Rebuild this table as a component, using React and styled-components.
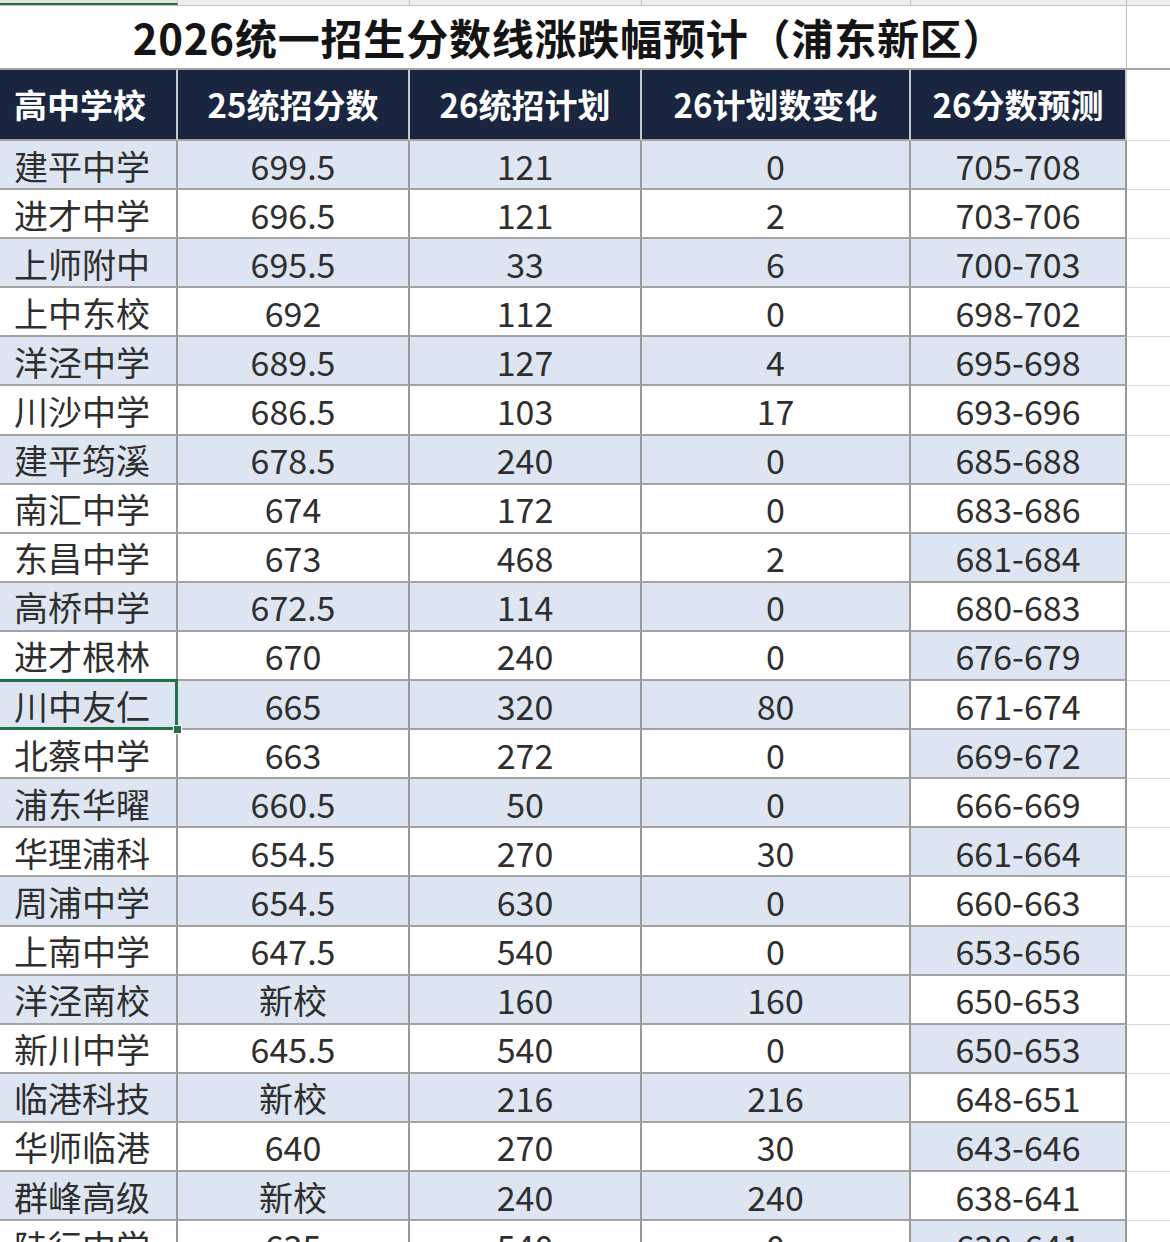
import React from "react";
import styled, { createGlobalStyle, css } from "styled-components";

const GlobalStyle = createGlobalStyle`
  html, body { margin: 0; padding: 0; background: #ffffff; }
  body { font-family: "Noto Sans CJK SC", "Noto Sans", sans-serif; }
  * { box-sizing: border-box; }
`;

const COLS = "178px 232px 232px 269px 216px 1fr";
const BLUE = "#dce5f1";
const LINE = "#a3a3a3";

const Sheet = styled.div`
  width: 1170px;
  height: 1242px;
  overflow: hidden;
  background: #fff;
  color: #2e2e2e;
`;

const Strip = styled.div`
  display: grid;
  grid-template-columns: ${COLS};
  height: 6px;
  background: #ededed;
  border-bottom: 1px solid #c4c4c4;
`;

const StripCell = styled.div`
  border-right: 1px solid #c4c4c4;
  ${(p) =>
    p.$active &&
    css`
      background: #e2e2e2;
      border-bottom: 2px solid #217346;
    `}
  &:last-child { border-right: none; }
`;

const TitleRow = styled.div`
  display: grid;
  grid-template-columns: ${COLS};
  height: 64px;
  border-bottom: 2px solid ${LINE};
`;

const Title = styled.h1`
  grid-column: 1 / span 5;
  margin: 0;
  display: flex;
  align-items: center;
  justify-content: center;
  padding: 0 0 0 12px;
  font-size: 42px;
  line-height: 1;
  font-weight: 700;
  color: #141414;
  letter-spacing: 0.8px;
  border-right: 1px solid #bdbdbd;
`;

const Row = styled.div`
  display: grid;
  grid-template-columns: ${COLS};
  grid-template-rows: 100%;
  height: ${(p) => (p.$header ? "71px" : "49.1px")};
  overflow: hidden;
`;

const HeadCell = styled.div`
  display: flex;
  align-items: center;
  justify-content: ${(p) => (p.$left ? "flex-start" : "center")};
  padding-left: ${(p) => (p.$left ? "14px" : "0")};
  background: #1a2640;
  color: #ffffff;
  font-size: 33px;
  line-height: 1;
  font-weight: 700;
  border-right: 2px solid #c5c8ce;
  border-bottom: 2px solid ${LINE};
`;

const Cell = styled.div`
  position: relative;
  display: flex;
  align-items: center;
  justify-content: ${(p) => (p.$left ? "flex-start" : "center")};
  padding-left: ${(p) => (p.$left ? "14px" : "0")};
  padding-top: 2px;
  background: ${(p) => (p.$blue ? BLUE : "#ffffff")};
  font-size: 34px;
  line-height: 1;
  font-weight: 400;
  color: #2e2e2e;
  white-space: nowrap;
  border-right: 2px solid #999999;
  border-bottom: 2px solid ${LINE};
  ${(p) =>
    p.$selected &&
    css`
      &::after {
        content: "";
        position: absolute;
        left: -2px;
        top: -2px;
        right: -2px;
        bottom: -2px;
        border: 3px solid #217346;
        border-left: none;
      }
    `}
`;

const SelectedRow = styled(Row)`
  overflow: visible;
  position: relative;
  z-index: 1;
`;

const Handle = styled.span`
  position: absolute;
  right: -6px;
  bottom: -6px;
  width: 9px;
  height: 9px;
  background: #217346;
  border: 1px solid #ffffff;
  z-index: 2;
`;

const BlankCell = styled.div`
  background: #ffffff;
  border-bottom: 1px solid #d6d6d6;
`;

const rows = [
  ["建平中学", "699.5", "121", "0", "705-708"],
  ["进才中学", "696.5", "121", "2", "703-706"],
  ["上师附中", "695.5", "33", "6", "700-703"],
  ["上中东校", "692", "112", "0", "698-702"],
  ["洋泾中学", "689.5", "127", "4", "695-698"],
  ["川沙中学", "686.5", "103", "17", "693-696"],
  ["建平筠溪", "678.5", "240", "0", "685-688"],
  ["南汇中学", "674", "172", "0", "683-686"],
  ["东昌中学", "673", "468", "2", "681-684"],
  ["高桥中学", "672.5", "114", "0", "680-683"],
  ["进才根林", "670", "240", "0", "676-679"],
  ["川中友仁", "665", "320", "80", "671-674"],
  ["北蔡中学", "663", "272", "0", "669-672"],
  ["浦东华曜", "660.5", "50", "0", "666-669"],
  ["华理浦科", "654.5", "270", "30", "661-664"],
  ["周浦中学", "654.5", "630", "0", "660-663"],
  ["上南中学", "647.5", "540", "0", "653-656"],
  ["洋泾南校", "新校", "160", "160", "650-653"],
  ["新川中学", "645.5", "540", "0", "650-653"],
  ["临港科技", "新校", "216", "216", "648-651"],
  ["华师临港", "640", "270", "30", "643-646"],
  ["群峰高级", "新校", "240", "240", "638-641"],
  ["陆行中学", "635", "540", "0", "638-641"],
];

const headers = ["高中学校", "25统招分数", "26统招计划", "26计划数变化", "26分数预测"];

export default function App() {
  return (
    <>
      <GlobalStyle />
      <Sheet>
        <Strip>
          <StripCell $active />
          <StripCell />
          <StripCell />
          <StripCell />
          <StripCell />
          <StripCell />
        </Strip>
        <TitleRow>
          <Title>2026统一招生分数线涨跌幅预计（浦东新区）</Title>
          <div />
        </TitleRow>
        <Row $header>
          {headers.map((h, i) => (
            <HeadCell key={h} $left={i === 0}>
              {h}
            </HeadCell>
          ))}
          <BlankCell />
        </Row>
        {rows.map((r, i) => {
          const mainBlue = i < 8 ? i % 2 === 0 : i % 2 === 1;
          const lastBlue = i % 2 === 0;
          const selected = r[0] === "川中友仁";
          const RowComp = selected ? SelectedRow : Row;
          return (
            <RowComp key={r[0]}>
              <Cell $left $blue={mainBlue} $selected={selected}>
                {r[0]}
                {selected && <Handle />}
              </Cell>
              <Cell $blue={mainBlue}>{r[1]}</Cell>
              <Cell $blue={mainBlue}>{r[2]}</Cell>
              <Cell $blue={mainBlue}>{r[3]}</Cell>
              <Cell $blue={lastBlue}>{r[4]}</Cell>
              <BlankCell />
            </RowComp>
          );
        })}
      </Sheet>
    </>
  );
}
